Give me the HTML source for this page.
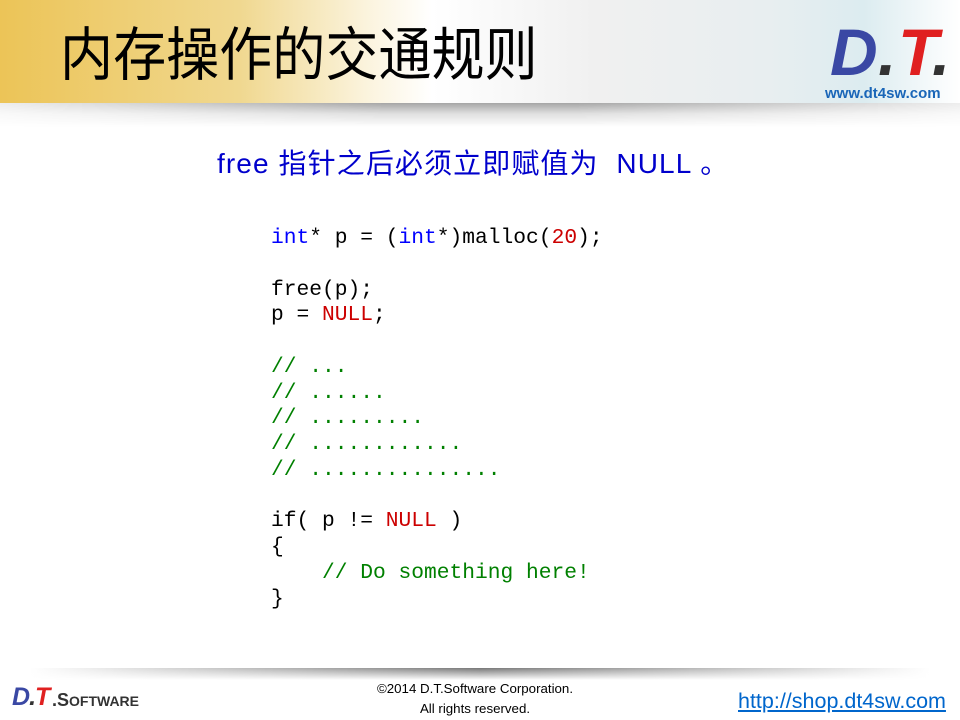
<!DOCTYPE html>
<html><head><meta charset="utf-8">
<style>
html,body{margin:0;padding:0;}
body{width:960px;height:720px;position:relative;overflow:hidden;background:#fff;font-family:"Liberation Sans","Noto Sans CJK SC",sans-serif;}
#hdr{position:absolute;left:0;top:0;width:960px;height:103px;
background:linear-gradient(90deg,#ecc457 0%,#f0d890 25%,#fbf3dc 38%,#ffffff 45%,#f0f0f0 62%,#e8eef0 80%,#dcecf0 90%,#ffffff 100%);}
#shadow{position:absolute;left:0;top:103px;width:960px;height:24px;
background:linear-gradient(180deg,rgba(0,0,0,0.35) 0%,rgba(0,0,0,0.12) 45%,rgba(255,255,255,0) 100%);
-webkit-mask:linear-gradient(90deg,rgba(0,0,0,.2),#000 40%,#000 60%,rgba(0,0,0,.2));}
#title{position:absolute;left:60px;top:17px;font-size:58px;line-height:66px;color:#000;font-family:"Noto Sans CJK SC",sans-serif;transform:scaleX(0.915);transform-origin:0 0;white-space:nowrap;}
.lg{position:absolute;font-family:"Liberation Sans",sans-serif;font-weight:bold;font-style:italic;}
#sub{position:absolute;left:217px;top:145px;font-size:28px;line-height:38px;color:#0000cc;white-space:pre;letter-spacing:1.1px;}
#code{position:absolute;left:271px;top:226px;font-family:"Liberation Mono",monospace;font-size:21.25px;line-height:25.75px;color:#000;white-space:pre;}
.b{color:#0000ff}.r{color:#cc0000}.g{color:#008000}
#fbar{position:absolute;left:30px;top:668px;width:900px;height:12px;
background:linear-gradient(90deg,rgba(255,255,255,0),#555 50%,rgba(255,255,255,0));}
#fbar2{position:absolute;left:30px;top:668px;width:900px;height:12px;background:linear-gradient(180deg,rgba(255,255,255,0.2),rgba(255,255,255,1));}
#copy{position:absolute;left:340px;top:679px;width:270px;text-align:center;font-size:13.3px;line-height:20px;color:#000;white-space:nowrap;}
#url{position:absolute;left:738px;top:689px;font-size:21.5px;color:#0066cc;text-decoration:underline;}
</style></head><body>
<div id="hdr"></div>
<div id="shadow"></div>
<div id="title">内存操作的交通规则</div>
<div class="lg" style="left:830px;top:14px;font-size:66px;color:#3a48a4;letter-spacing:-2px;">D</div>
<div class="lg" style="left:878px;top:14px;font-size:66px;color:#333;">.</div>
<div class="lg" style="left:898px;top:14px;font-size:66px;color:#e02020;">T</div>
<div class="lg" style="left:932px;top:14px;font-size:66px;color:#333;">.</div>
<div style="position:absolute;left:825px;top:85px;font-size:15px;font-weight:bold;color:#1a66b8;">www.dt4sw.com</div>
<div id="sub">free 指针之后必须立即赋值为  NULL 。</div>
<div id="code"><span class="b">int</span>* p = (<span class="b">int</span>*)malloc(<span class="r">20</span>);

free(p);
p = <span class="r">NULL</span>;

<span class="g">// ...
// ......
// .........
// ............
// ...............</span>

if( p != <span class="r">NULL</span> )
{
    <span class="g">// Do something here!</span>
}</div>
<div id="fbar"></div><div id="fbar2"></div>
<div class="lg" style="left:12px;top:683px;font-size:25px;color:#3a48a4;letter-spacing:-1px;">D<span style="color:#333">.</span><span style="color:#e02020">T</span></div>
<div style="position:absolute;left:52px;top:690px;font-size:18px;font-weight:bold;color:#333;">.S<span style="font-size:14px">OFTWARE</span></div>
<div id="copy">©2014 D.T.Software Corporation.<br>All rights reserved.</div>
<div id="url">http://shop.dt4sw.com</div>
</body></html>
